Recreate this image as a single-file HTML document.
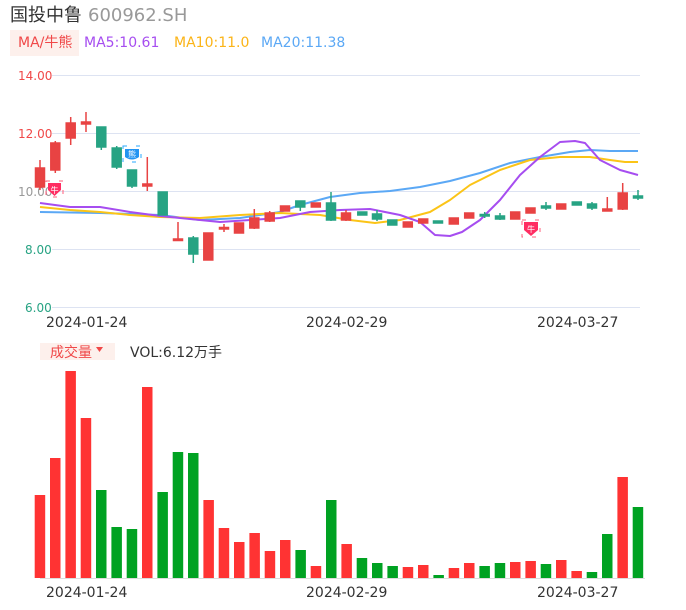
<!DOCTYPE html>
<html><head><meta charset="utf-8"><style>
body{margin:0;background:#fff;width:686px;height:606px;overflow:hidden;font-family:"DejaVu Sans","Noto Sans CJK SC",sans-serif}
svg text{font-family:"DejaVu Sans","Noto Sans CJK SC",sans-serif}
</style></head><body>
<svg width="686" height="606" viewBox="0 0 686 606" xmlns="http://www.w3.org/2000/svg">
<text x="10" y="21" font-size="18" fill="#333">国投中鲁</text>
<text x="88" y="21" font-size="18" fill="#999">600962.SH</text>
<rect x="10" y="30" width="69" height="26" fill="#fdf0ec"/>
<text x="18" y="47" font-size="14" fill="#f04848">MA/牛熊</text>
<text x="84" y="47" font-size="14" fill="#a64df0">MA5:10.61</text>
<text x="174" y="47" font-size="14" fill="#fbb417">MA10:11.0</text>
<text x="261" y="47" font-size="14" fill="#5ba8f5">MA20:11.38</text>
<g stroke="#dde3f2" stroke-width="1">
<line x1="52" y1="75.5" x2="640" y2="75.5"/><line x1="52" y1="133.5" x2="640" y2="133.5"/><line x1="52" y1="191.5" x2="640" y2="191.5"/><line x1="52" y1="249.5" x2="640" y2="249.5"/><line x1="52" y1="307.5" x2="640" y2="307.5"/>
</g>
<g font-size="12">
<text x="18" y="80" fill="#f04848">14.00</text>
<text x="18" y="138" fill="#f04848">12.00</text>
<text x="18" y="196" fill="#999">10.00</text>
<text x="25" y="254" fill="#27a383">8.00</text>
<text x="25" y="312" fill="#27a383">6.00</text>
<text x="46" y="327" fill="#333" font-size="14">2024-01-24</text>
<text x="306" y="327" fill="#333" font-size="14">2024-02-29</text>
<text x="537" y="327" fill="#333" font-size="14">2024-03-27</text>
</g>
<g fill="none" stroke-width="2" stroke-linejoin="round">
<polyline stroke="#5ba8f5" points="40,212 100,213 160,215 200,220 240,218 280,212 300,205 330,197 360,193 390,191 420,187 450,181 480,173 510,163 540,157 570,152 590,150 610,151 638,151"/>
<polyline stroke="#fbc417" points="40,207 70,210 100,212 130,215 160,217 200,218 240,215 280,213 320,215 350,220 375,223 400,220 430,212 450,200 470,185 500,170 530,160 560,157 590,157 610,160 625,162 638,162"/>
<polyline stroke="#a64df0" points="40,203 70,207 100,207 130,212 160,216 190,219 220,222 250,220 280,218 310,212 340,210 370,209 400,215 420,222 435,235 450,236 462,232 480,220 500,200 520,175 540,157 560,142 575,141 585,143 600,160 620,170 638,175"/>
</g>
<g stroke-width="1.5">
<g stroke="#e84343" fill="#e84343">
<line x1="40" y1="160" x2="40" y2="190"/><rect x="35.5" y="168" width="9" height="19"/>
<line x1="55.3" y1="141" x2="55.3" y2="173"/><rect x="50.8" y="143" width="9" height="27"/>
<line x1="70.7" y1="117" x2="70.7" y2="145"/><rect x="66.2" y="123" width="9" height="15"/>
<line x1="86" y1="112" x2="86" y2="132"/><rect x="81.5" y="122" width="9" height="2"/>
<line x1="147.3" y1="157" x2="147.3" y2="191"/><rect x="142.8" y="184" width="9" height="2"/>
<line x1="178" y1="222" x2="178" y2="240"/><rect x="173.5" y="239" width="9" height="1.5"/>
<rect x="203.8" y="233" width="9" height="27"/>
<line x1="224" y1="224" x2="224" y2="232"/><rect x="219.5" y="227.5" width="9" height="1.5"/>
<rect x="234.5" y="223" width="9" height="10"/>
<line x1="254.3" y1="209" x2="254.3" y2="229"/><rect x="249.8" y="218" width="9" height="10"/>
<line x1="269.7" y1="211" x2="269.7" y2="222"/><rect x="265.2" y="213" width="9" height="8"/>
<rect x="280.5" y="206" width="9" height="5"/>
<rect x="311.3" y="203" width="9" height="4"/>
<line x1="346" y1="210" x2="346" y2="221"/><rect x="341.5" y="213" width="9" height="7"/>
<rect x="403.3" y="222" width="9" height="5"/>
<rect x="418.7" y="219" width="9" height="4"/>
<rect x="449.3" y="218" width="9" height="6"/>
<rect x="464.7" y="213" width="9" height="5"/>
<rect x="510.7" y="212" width="9" height="7"/>
<rect x="526" y="208" width="9" height="5"/>
<rect x="556.7" y="204" width="9" height="5"/>
<line x1="607.3" y1="197" x2="607.3" y2="211"/><rect x="602.8" y="209" width="9" height="2"/>
<line x1="622.7" y1="183" x2="622.7" y2="210"/><rect x="618.2" y="193" width="9" height="16"/>
</g>
<g stroke="#27a383" fill="#27a383">
<line x1="101.3" y1="127" x2="101.3" y2="150"/><rect x="96.8" y="127" width="9" height="20"/>
<line x1="116.7" y1="146" x2="116.7" y2="169"/><rect x="112.2" y="148" width="9" height="19"/>
<line x1="132" y1="170" x2="132" y2="188"/><rect x="127.5" y="170" width="9" height="16"/>
<rect x="158.2" y="192" width="9" height="23"/>
<line x1="193.3" y1="236" x2="193.3" y2="263"/><rect x="188.8" y="238" width="9" height="16"/>
<line x1="300.3" y1="201" x2="300.3" y2="211"/><rect x="295.8" y="201" width="9" height="6"/>
<line x1="331" y1="192" x2="331" y2="221"/><rect x="326.5" y="203" width="9" height="17"/>
<rect x="357.8" y="212" width="9" height="3"/>
<line x1="377" y1="210" x2="377" y2="221"/><rect x="372.5" y="214" width="9" height="5"/>
<rect x="387.8" y="220" width="9" height="5"/>
<rect x="433.5" y="221" width="9" height="2"/>
<line x1="484.7" y1="212" x2="484.7" y2="218"/><rect x="480.2" y="214.5" width="9" height="1.5"/>
<line x1="500" y1="213" x2="500" y2="220"/><rect x="495.5" y="216" width="9" height="3"/>
<line x1="546" y1="202" x2="546" y2="210"/><rect x="541.5" y="206" width="9" height="2"/>
<rect x="572.3" y="202" width="9" height="3"/>
<line x1="592" y1="202" x2="592" y2="210"/><rect x="587.5" y="204" width="9" height="4"/>
<line x1="638" y1="190" x2="638" y2="200"/><rect x="633.5" y="196" width="9" height="2"/>
</g>
</g>
<g>
<rect x="46" y="181" width="17" height="16" fill="none" stroke="#ff5c7a" stroke-dasharray="4 9" stroke-width="1"/>
<path d="M48 183 h13 v7 l-6.5 6 l-6.5 -6z" fill="#ff2d62"/>
<text x="54.5" y="193" font-size="8" fill="#fff" text-anchor="middle">牛</text>
<rect x="123" y="146" width="18" height="16" fill="none" stroke="#28a8ff" stroke-dasharray="4 9" stroke-width="1"/>
<path d="M125 149 h14 v8 q-7 5 -14 0z" fill="#2294f2"/>
<text x="132" y="157" font-size="8" fill="#fff" text-anchor="middle">熊</text>
<rect x="522" y="220" width="18" height="17" fill="none" stroke="#ff5c7a" stroke-dasharray="4 9" stroke-width="1"/>
<path d="M524 222 h14 v8 l-7 6 l-7 -6z" fill="#ff2d62"/>
<text x="531" y="232" font-size="8" fill="#fff" text-anchor="middle">牛</text>
</g>
<rect x="40" y="343" width="75" height="17" fill="#fdf0ec"/>
<text x="50" y="357" font-size="14" fill="#f04848">成交量</text>
<path d="M96 347 h7 l-3.5 5z" fill="#f04848"/>
<text x="130" y="357" font-size="14" fill="#333">VOL:6.12万手</text>
<line x1="40" y1="578.5" x2="645" y2="578.5" stroke="#ddd"/>
<g fill="#ff3333">
<rect x="34.7" y="495" width="10.5" height="83"/>
<rect x="50" y="458" width="10.5" height="120"/>
<rect x="65.4" y="371" width="10.5" height="207"/>
<rect x="80.7" y="418" width="10.5" height="160"/>
<rect x="142" y="387" width="10.5" height="191"/>
<rect x="203.4" y="500" width="10.5" height="78"/>
<rect x="218.7" y="528" width="10.5" height="50"/>
<rect x="234" y="542" width="10.5" height="36"/>
<rect x="249.4" y="533" width="10.5" height="45"/>
<rect x="264.7" y="551" width="10.5" height="27"/>
<rect x="280" y="540" width="10.5" height="38"/>
<rect x="310.7" y="566" width="10.5" height="12"/>
<rect x="341.4" y="544" width="10.5" height="34"/>
<rect x="402.7" y="567" width="10.5" height="11"/>
<rect x="418" y="565" width="10.5" height="13"/>
<rect x="448.7" y="568" width="10.5" height="10"/>
<rect x="464" y="563" width="10.5" height="15"/>
<rect x="510" y="562" width="10.5" height="16"/>
<rect x="525.4" y="561" width="10.5" height="17"/>
<rect x="556" y="560" width="10.5" height="18"/>
<rect x="571.4" y="571" width="10.5" height="7"/>
<rect x="617.4" y="477" width="10.5" height="101"/>
</g>
<g fill="#00a222">
<rect x="96" y="490" width="10.5" height="88"/>
<rect x="111.4" y="527" width="10.5" height="51"/>
<rect x="126.7" y="529" width="10.5" height="49"/>
<rect x="157.4" y="492" width="10.5" height="86"/>
<rect x="172.7" y="452" width="10.5" height="126"/>
<rect x="188" y="453" width="10.5" height="125"/>
<rect x="295.4" y="550" width="10.5" height="28"/>
<rect x="326" y="500" width="10.5" height="78"/>
<rect x="356.7" y="558" width="10.5" height="20"/>
<rect x="372" y="563" width="10.5" height="15"/>
<rect x="387.4" y="566" width="10.5" height="12"/>
<rect x="433.4" y="575" width="10.5" height="3"/>
<rect x="479.4" y="566" width="10.5" height="12"/>
<rect x="494.7" y="563" width="10.5" height="15"/>
<rect x="540.7" y="564" width="10.5" height="14"/>
<rect x="586.7" y="572" width="10.5" height="6"/>
<rect x="602" y="534" width="10.5" height="44"/>
<rect x="632.7" y="507" width="10.5" height="71"/>
</g>
<g font-size="14" fill="#333">
<text x="46" y="597">2024-01-24</text>
<text x="306" y="597">2024-02-29</text>
<text x="537" y="597">2024-03-27</text>
</g>
</svg>
</body></html>
